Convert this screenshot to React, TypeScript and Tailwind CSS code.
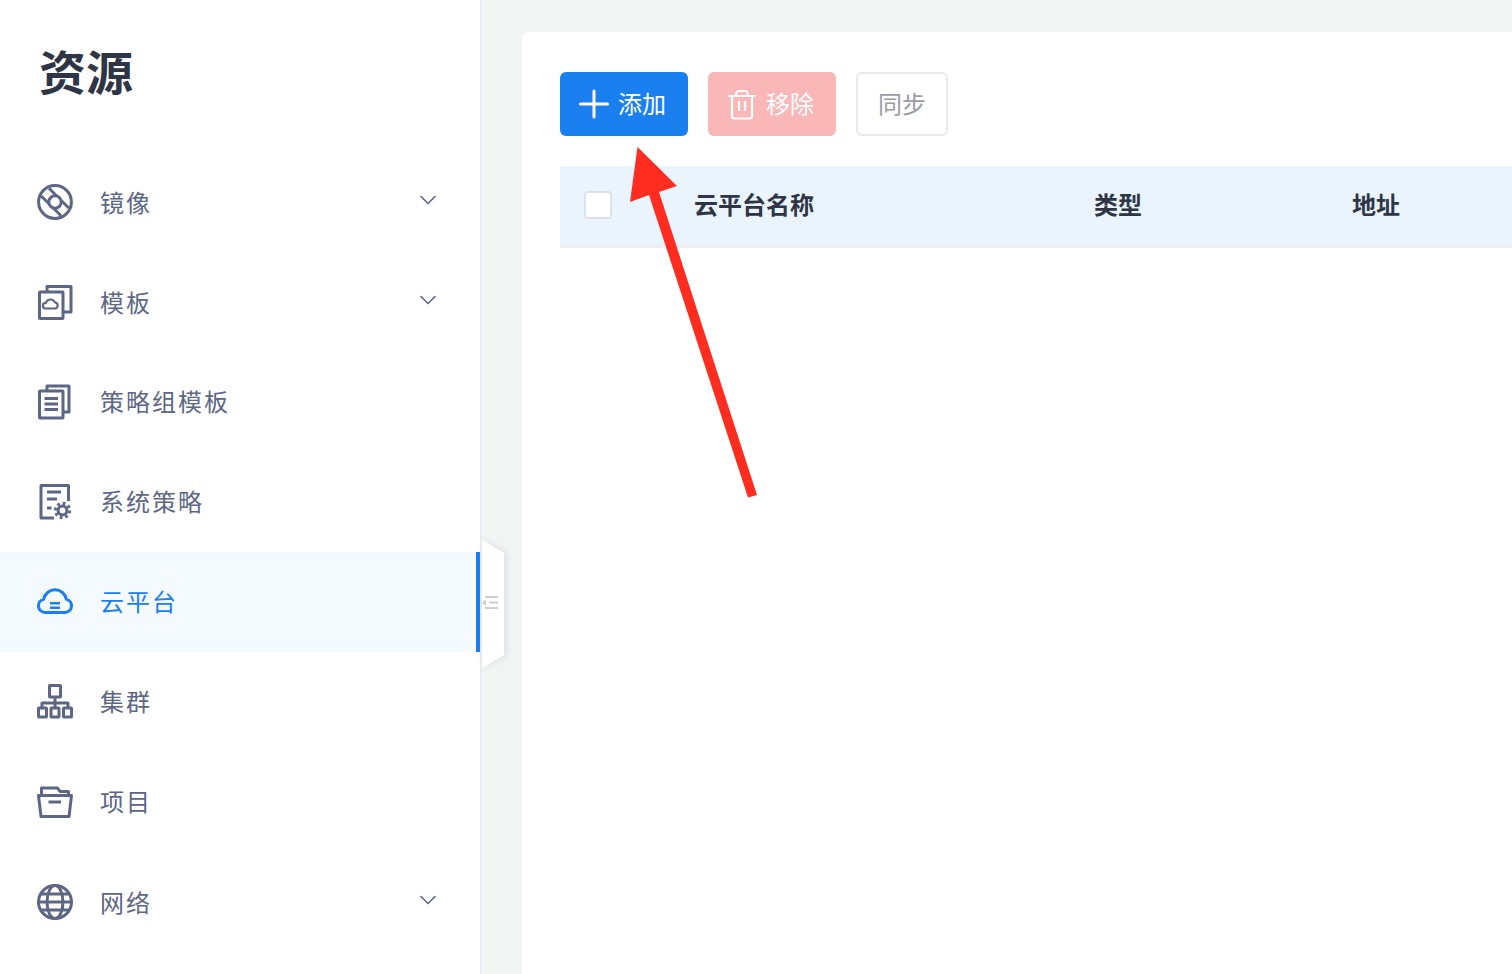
import { ChevronDown } from "lucide-react";
import type { ReactNode } from "react";

type IconProps = { children: ReactNode };

const Icon = ({ children }: IconProps) => (
  <svg width="38" height="38" viewBox="0 0 38 38" fill="none" stroke="currentColor" strokeWidth="3" strokeLinejoin="round" className="shrink-0">
    {children}
  </svg>
);

const menu = [
  {
    label: "镜像",
    arrow: true,
    icon: (
      <Icon>
        <circle cx="19" cy="19" r="16.4" />
        <circle cx="19" cy="19" r="6.2" />
        <path d="M13 5.2L20.5 12.8M5.2 13L12.8 20.5M25.2 17.5L32.8 25M17.5 25.2L25 32.8" />
      </Icon>
    ),
  },
  {
    label: "模板",
    arrow: true,
    icon: (
      <Icon>
        <path d="M11 8V3.5H35V29H27" />
        <rect x="3.5" y="9" width="23.5" height="26.5" rx="0.5" />
        <path d="M9.5 25.5a2.8 2.8 0 0 1 .4-5.6 4.8 4.8 0 0 1 9-.5 3.1 3.1 0 0 1 .4 6.1z" strokeWidth="2.2" />
      </Icon>
    ),
  },
  {
    label: "策略组模板",
    arrow: false,
    icon: (
      <Icon>
        <path d="M11 8V3H33V29H27" />
        <rect x="3.5" y="8" width="23.5" height="27" rx="0.5" />
        <path d="M8.5 15.5H22M8.5 21H22M8.5 26.5H22" />
      </Icon>
    ),
  },
  {
    label: "系统策略",
    arrow: false,
    icon: (
      <Icon>
        <path d="M18 35H5V2.5H32.5V18" />
        <path d="M11 9H25M11 16H21M11 25H15.5" />
        <circle cx="26.5" cy="27.5" r="4.4" strokeWidth="3" />
        <circle cx="26.5" cy="27.5" r="7.2" strokeWidth="3" strokeDasharray="2.8 2.85" />
      </Icon>
    ),
  },
  {
    label: "云平台",
    arrow: false,
    active: true,
    icon: (
      <Icon>
        <path d="M9 29.5a6.7 6.7 0 0 1-1.4-13.2 11.6 11.6 0 0 1 22.8 0 6.7 6.7 0 0 1-1.4 13.2z" strokeWidth="3" />
        <path d="M14 20.2H24M14 24.8H24" strokeWidth="2.6" />
      </Icon>
    ),
  },
  {
    label: "集群",
    arrow: false,
    icon: (
      <Icon>
        <rect x="13.5" y="2.5" width="11" height="11.5" rx="0.5" />
        <path d="M19 14V20M6 25V20H32V25M19 20V25" />
        <rect x="2.5" y="25" width="8" height="9" rx="0.5" />
        <rect x="15" y="25" width="8" height="9" rx="0.5" />
        <rect x="27.5" y="25" width="8" height="9" rx="0.5" />
      </Icon>
    ),
  },
  {
    label: "项目",
    arrow: false,
    icon: (
      <Icon>
        <path d="M5.5 12V5H21.5L24 8.5H32.5V12" />
        <path d="M2.5 12.5H35.5L33 33.5H5z" />
        <path d="M12.5 19H25" />
      </Icon>
    ),
  },
  {
    label: "网络",
    arrow: true,
    icon: (
      <Icon>
        <circle cx="19" cy="19" r="16.5" />
        <ellipse cx="19" cy="19" rx="8" ry="16.5" />
        <path d="M2.5 19H35.5M5 11H33M5 27H33" />
      </Icon>
    ),
  },
];

export default function App() {
  return (
    <div className="relative flex h-[974px] w-full overflow-hidden bg-[#f3f5f5] font-['Noto_Sans_CJK_SC','Noto_Sans',sans-serif]">
      {/* SIDEBAR */}
      <aside className="w-[482px] shrink-0 border-r-2 border-[#e9ebf1] bg-white">
        <h1 className="flex h-[152px] items-center pb-[12px] pl-[39px] text-[47px] font-bold text-[#2f3545]">资源</h1>
        <nav>
          {menu.map((item) => (
            <div
              key={item.label}
              className={
                item.active
                  ? "flex h-[100px] items-center gap-[26px] border-r-4 border-[#1a7ff0] bg-[#f5faff] pl-[36px] text-[#1a7ff0]"
                  : "flex h-[100px] items-center gap-[26px] pl-[36px] text-[#5d6685]"
              }
            >
              <span className="flex h-[38px] w-[38px] shrink-0 items-center justify-center">{item.icon}</span>
              <span className={item.arrow ? "flex-1 text-[24px] tracking-[2px]" : "flex-1 pb-[2px] text-[24px] tracking-[2px]"}>{item.label}</span>
              {item.arrow && <ChevronDown size={28} strokeWidth={1.4} className="mr-[38px] mb-[4px]" />}
            </div>
          ))}
        </nav>
      </aside>

      {/* CONTENT */}
      <main className="min-w-0 flex-1 pt-[32px] pl-[40px]">
        <div className="h-full rounded-tl-[8px] bg-white pt-[40px] pl-[38px]">
          <div className="flex gap-[20px]">
            <button className="flex h-[64px] w-[128px] items-center gap-[8px] rounded-[6px] bg-[#1a7fef] pb-[2px] pl-[18px] text-[24px] text-white">
              <svg width="32" height="32" viewBox="0 0 32 32" stroke="currentColor" strokeWidth="3" strokeLinecap="round" className="mt-[2px]">
                <path d="M16 3V29M2.5 16H29.5" />
              </svg>
              添加
            </button>
            <button className="flex h-[64px] w-[128px] items-center gap-[9px] rounded-[6px] bg-[#f9b7b7] pb-[2px] pl-[19px] text-[24px] text-white">
              <svg width="30" height="32" viewBox="0 0 30 32" fill="none" stroke="currentColor" strokeWidth="2.2" strokeLinejoin="round" className="mt-[2px]">
                <path d="M1.5 8H28.5M9 8C9 4.5 10 3 12 3H18C20 3 21 4.5 21 8M5 8V28C5 29.5 6 30.5 7.5 30.5H22.5C24 30.5 25 29.5 25 28V8M12 13V23M18 13V23" />
              </svg>
              移除
            </button>
            <button className="flex h-[64px] w-[92px] items-center justify-center rounded-[6px] border-2 border-[#e6e9f0] bg-white pb-[2px] text-[24px] text-[#9a9ca3]">
              同步
            </button>
          </div>

          <div className="mt-[30px] flex h-[82px] items-center border-b-4 border-[#edeff5] bg-[#e9f4ff] pb-[1px] text-[24px] font-bold text-[#2f3545]">
            <div className="w-[134px] pl-[24px]">
              <div className="h-[28px] w-[28px] rounded-[4px] border-2 border-[#dde2ea] bg-white" />
            </div>
            <div className="w-[400px] pb-[2px]">云平台名称</div>
            <div className="w-[258px] pb-[2px]">类型</div>
            <div className="pb-[2px]">地址</div>
          </div>
        </div>
      </main>

      {/* sidebar collapse handle */}
      <div className="absolute top-[536px] left-[482px] h-[136px] w-[30px]">
        <svg width="30" height="136" viewBox="0 0 30 136" className="drop-shadow-[3px_0_4px_rgba(90,100,130,0.14)]">
          <path d="M0 4L22 17V119L0 132z" fill="#fff" />
        </svg>
        <svg width="16" height="14" viewBox="0 0 16 14" className="absolute top-[60px] left-0" fill="#cfcfcf">
          <path d="M0 6.5L4 3.5V10z" />
          <rect x="3" y="0" width="13" height="2" />
          <rect x="7" y="5.5" width="9" height="2" />
          <rect x="3" y="11" width="13" height="2" />
        </svg>
      </div>

      {/* annotation arrow */}
      <svg width="1512" height="974" viewBox="0 0 1512 974" className="pointer-events-none absolute top-0 left-0">
        <path d="M637.5 147L677 186L659 192L757 495L748 497.5L649 195L630 202z" fill="#ff2d1f" />
      </svg>
    </div>
  );
}
